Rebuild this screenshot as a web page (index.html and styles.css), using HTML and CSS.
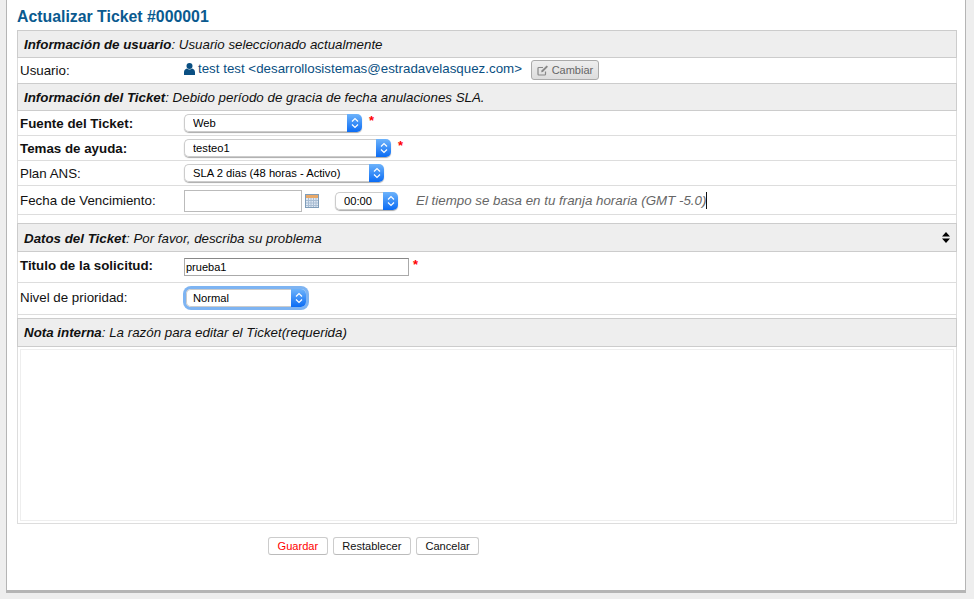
FILE: index.html
```html
<!DOCTYPE html>
<html lang="es">
<head>
  <meta charset="UTF-8">
  <title>Actualizar Ticket #000001</title>
  <link rel="stylesheet" href="styles.css">
</head>
<body>
  <div class="page">
    <h2 class="title">Actualizar Ticket #000001</h2>

    <div class="box">
      <div class="head"><span><b>Información de usuario</b>: Usuario seleccionado actualmente</span></div>
      <div class="row row-user">
        <div class="lbl">Usuario:</div>
        <div class="ctl">
          <svg class="ico-user" width="11" height="12" viewBox="0 0 11 12"><circle cx="5.5" cy="3" r="3"/><path d="M0 12V9.2C0 7.2 1.4 5.9 3 5.6 3.7 6.2 4.5 6.5 5.5 6.5S7.3 6.2 8 5.6C9.6 5.9 11 7.2 11 9.2V12Z"/></svg>
          <span class="user-link">test test &lt;desarrollosistemas@estradavelasquez.com&gt;</span>
          <button type="button" class="btn-change">
            <svg width="12" height="11" viewBox="0 0 12 11" fill="none" stroke="#888" stroke-width="1.2"><path d="M8.5 6.5V9.2C8.5 9.7 8.1 10 7.7 10H1.8C1.3 10 1 9.7 1 9.2V3.3C1 2.9 1.3 2.5 1.8 2.5H6"/><path d="M4.5 5.5 4.2 7.2 5.9 6.9 11 1.8 9.7.6Z" fill="#888" stroke="none"/></svg>
            Cambiar
          </button>
        </div>
      </div>
      <div class="head"><span><b>Información del Ticket</b>: Debido período de gracia de fecha anulaciones SLA.</span></div>
      <div class="row">
        <div class="lbl strong">Fuente del Ticket:</div>
        <div class="ctl">
          <div class="sel w-fuente">
            <select><option>Web</option></select>
            <span class="arrow"><svg width="8" height="12" viewBox="0 0 8 12"><path d="M1 4.5 4 1.5 7 4.5M1 7.5 4 10.5 7 7.5"/></svg></span>
          </div>
          <span class="req">*</span>
        </div>
      </div>
      <div class="row">
        <div class="lbl strong">Temas de ayuda:</div>
        <div class="ctl">
          <div class="sel w-temas">
            <select><option>testeo1</option></select>
            <span class="arrow"><svg width="8" height="12" viewBox="0 0 8 12"><path d="M1 4.5 4 1.5 7 4.5M1 7.5 4 10.5 7 7.5"/></svg></span>
          </div>
          <span class="req">*</span>
        </div>
      </div>
      <div class="row">
        <div class="lbl">Plan ANS:</div>
        <div class="ctl">
          <div class="sel w-plan">
            <select><option>SLA 2 dias (48 horas - Activo)</option></select>
            <span class="arrow"><svg width="8" height="12" viewBox="0 0 8 12"><path d="M1 4.5 4 1.5 7 4.5M1 7.5 4 10.5 7 7.5"/></svg></span>
          </div>
        </div>
      </div>
      <div class="row row-date">
        <div class="lbl">Fecha de Vencimiento:</div>
        <div class="ctl">
          <input type="text" class="date-input">
          <svg class="ico-cal" width="14" height="14" viewBox="0 0 14 14">
            <rect x=".5" y=".5" width="13" height="13" fill="#dfe8f3" stroke="#7f9db9"/>
            <rect x="1" y="1" width="12" height="3" fill="#e8a868"/>
            <path d="M1 6.5H13M1 9H13M1 11.5H13M3.5 4V13M6 4V13M8.5 4V13M11 4V13" stroke="#a9bdd3" stroke-width="1"/>
          </svg>
          <div class="sel w-time">
            <select><option>00:00</option></select>
            <span class="arrow"><svg width="8" height="12" viewBox="0 0 8 12"><path d="M1 4.5 4 1.5 7 4.5M1 7.5 4 10.5 7 7.5"/></svg></span>
          </div>
          <em class="tz">El tiempo se basa en tu franja horaria (GMT -5.0)</em><span class="caret"></span>
        </div>
      </div>
    </div>

    <div class="box gap-8">
      <div class="head head-tall head-data">
        <span><b>Datos del Ticket</b>: Por favor, describa su problema</span>
        <svg class="ico-sort" width="8" height="11" viewBox="0 0 8 11"><path d="M4 0 8 4.5H0ZM0 6.5H8L4 11Z"/></svg>
      </div>
      <div class="row row-title">
        <div class="lbl strong">Titulo de la solicitud:</div>
        <div class="ctl">
          <input type="text" class="title-input" value="prueba1">
          <span class="req">*</span>
        </div>
      </div>
      <div class="row row-prio">
        <div class="lbl">Nivel de prioridad:</div>
        <div class="ctl">
          <div class="sel w-prio focus">
            <select><option>Normal</option></select>
            <span class="arrow"><svg width="8" height="12" viewBox="0 0 8 12"><path d="M1 4.5 4 1.5 7 4.5M1 7.5 4 10.5 7 7.5"/></svg></span>
          </div>
        </div>
      </div>
    </div>

    <div class="box gap-3 last">
      <div class="head head-tall"><span><b>Nota interna</b>: La razón para editar el Ticket(requerida)</span></div>
      <div class="note-wrap"><textarea class="note"></textarea></div>
    </div>

    <div class="actions">
      <button type="button" class="btn save">Guardar</button>
      <button type="button" class="btn">Restablecer</button>
      <button type="button" class="btn">Cancelar</button>
    </div>
  </div>
</body>
</html>
```

FILE: styles.css
```css
html, body {
  margin: 0;
  height: 599px;
  overflow: hidden;
}
body {
  background-color: #eee;
  font-family: "Liberation Sans", Arial, sans-serif;
  font-size: 13.33px;
  color: #111;
}
.page {
  box-sizing: border-box;
  width: 960px;
  height: 593px;
  margin-left: 6px;
  padding: 9px 9px 0 10px;
  background-color: #fff;
  border-left: 1px solid #b5b5b5;
  border-right: 1px solid #b5b5b5;
  border-bottom: 3px solid #b5b5b5;
}
.title {
  margin: 0 0 5px;
  height: 16px;
  line-height: 16px;
  font-size: 15.85px;
  font-weight: bold;
  color: #0a5a8f;
}

/* Bloques */
.box {
  width: 940px;
  box-sizing: border-box;
  border-left: 1px solid #ddd;
  border-right: 1px solid #ddd;
}
.gap-8 { padding-top: 8px; }
.gap-3 { padding-top: 3px; }
.last { border-bottom: 1px solid #ddd; height: 209px; }
.head {
  box-sizing: border-box;
  height: 28px;
  margin: 0 -1px;
  padding: 0 7px 0 6px;
  display: flex;
  align-items: center;
  justify-content: space-between;
  background-color: #eee;
  border: 1px solid #ccc;
  font-style: italic;
  color: #111;
}
.head-tall { height: 29px; }
.head-data { padding-top: 2px; }
.row {
  box-sizing: border-box;
  height: 25px;
  display: flex;
  align-items: center;
  border-bottom: 1px solid #ddd;
}
.row-user { border-bottom: 0; }
.row-date { height: 29px; }
.row-title { height: 31px; }
.row-prio { height: 32px; padding-bottom: 2px; }
.lbl {
  width: 166px;
  padding-left: 2px;
  box-sizing: border-box;
  flex: none;
}
.row-title .lbl { margin-top: -4px; }
.strong { font-weight: bold; }
.ctl {
  display: flex;
  align-items: center;
}
.req {
  color: #f00;
  font-weight: bold;
  font-size: 13px;
  margin-left: 7px;
  margin-top: -6px;
}

/* Usuario */
.ico-user { fill: #0a4f82; margin: 0 3px 3px 0; }
.user-link { color: #0a4f82; margin-bottom: 4px; }
.btn-change {
  box-sizing: border-box;
  width: 68px;
  height: 20px;
  margin: -1px 0 0 9px;
  padding: 0;
  display: flex;
  align-items: center;
  justify-content: center;
  gap: 3px;
  background: linear-gradient(#eee, #ddd);
  border: 1px solid #aaa;
  border-radius: 3px;
  font: 11px "Liberation Sans", Arial, sans-serif;
  color: #666;
}

/* Selects */
.sel {
  box-sizing: border-box;
  height: 18px;
  display: flex;
  border-radius: 5px;
  box-shadow: 0 1px 1px #aaa;
}
.sel select {
  flex: 1;
  min-width: 0;
  height: 18px;
  box-sizing: border-box;
  margin: 0;
  padding: 0 0 0 8px;
  appearance: none;
  -webkit-appearance: none;
  background-color: #fff;
  border: 1px solid #ccc;
  border-right: 0;
  border-radius: 5px 0 0 5px;
  outline: none;
  font: 11.2px "Liberation Sans", Arial, sans-serif;
  color: #000;
}
.arrow {
  flex: none;
  width: 15px;
  height: 18px;
  display: flex;
  align-items: center;
  justify-content: center;
  background: linear-gradient(#6db3fb, #0b6cf4);
  border-radius: 0 5px 5px 0;
}
.arrow svg { fill: none; stroke: #fff; stroke-width: 1.2; }
.w-fuente { width: 178px; }
.w-temas { width: 207px; }
.w-plan { width: 200px; }
.w-time { width: 63px; margin-left: 16px; }
.w-prio {
  width: 120px;
  margin-left: 2px;
  box-shadow: 0 0 0 3px #7eb4f2;
}
.w-prio select { padding-left: 6px; }

/* Fecha */
.row-date .ctl { padding-top: 2px; }
.date-input {
  box-sizing: border-box;
  width: 118px;
  height: 22px;
  margin: 0;
  border: 1px solid #bbb;
  padding: 1px 2px;
}
.ico-cal { margin-left: 3px; }
.tz { margin: 0 0 2px 18px; color: #666; }
.caret {
  width: 1px;
  height: 17px;
  margin-bottom: 2px;
  background-color: #111;
}

/* Titulo */
.title-input {
  box-sizing: border-box;
  width: 225px;
  height: 18px;
  margin: 0;
  padding: 0 1px;
  border: 1px solid #aaa;
  border-top-color: #888;
  font: 11px "Liberation Sans", Arial, sans-serif;
  color: #000;
}
.title-input + .req { margin-left: 4px; }
.ico-sort { fill: #000; margin: -2px -1px 0 0; }

/* Nota */
.note-wrap { padding: 2px 2px 0; }
.note {
  display: block;
  box-sizing: border-box;
  width: 934px;
  height: 172px;
  margin: 0;
  border: 1px solid #eee;
  resize: none;
  outline: none;
}

/* Botones */
.actions {
  display: flex;
  gap: 5px;
  padding: 13px 0 0 251px;
}
.btn {
  box-sizing: border-box;
  height: 18px;
  padding: 0 8.5px;
  background-color: #fff;
  border: 1px solid #ccc;
  border-bottom-color: #bbb;
  border-radius: 3px;
  font: 11.1px "Liberation Sans", Arial, sans-serif;
  color: #111;
}
.save { color: #f00; }
```
